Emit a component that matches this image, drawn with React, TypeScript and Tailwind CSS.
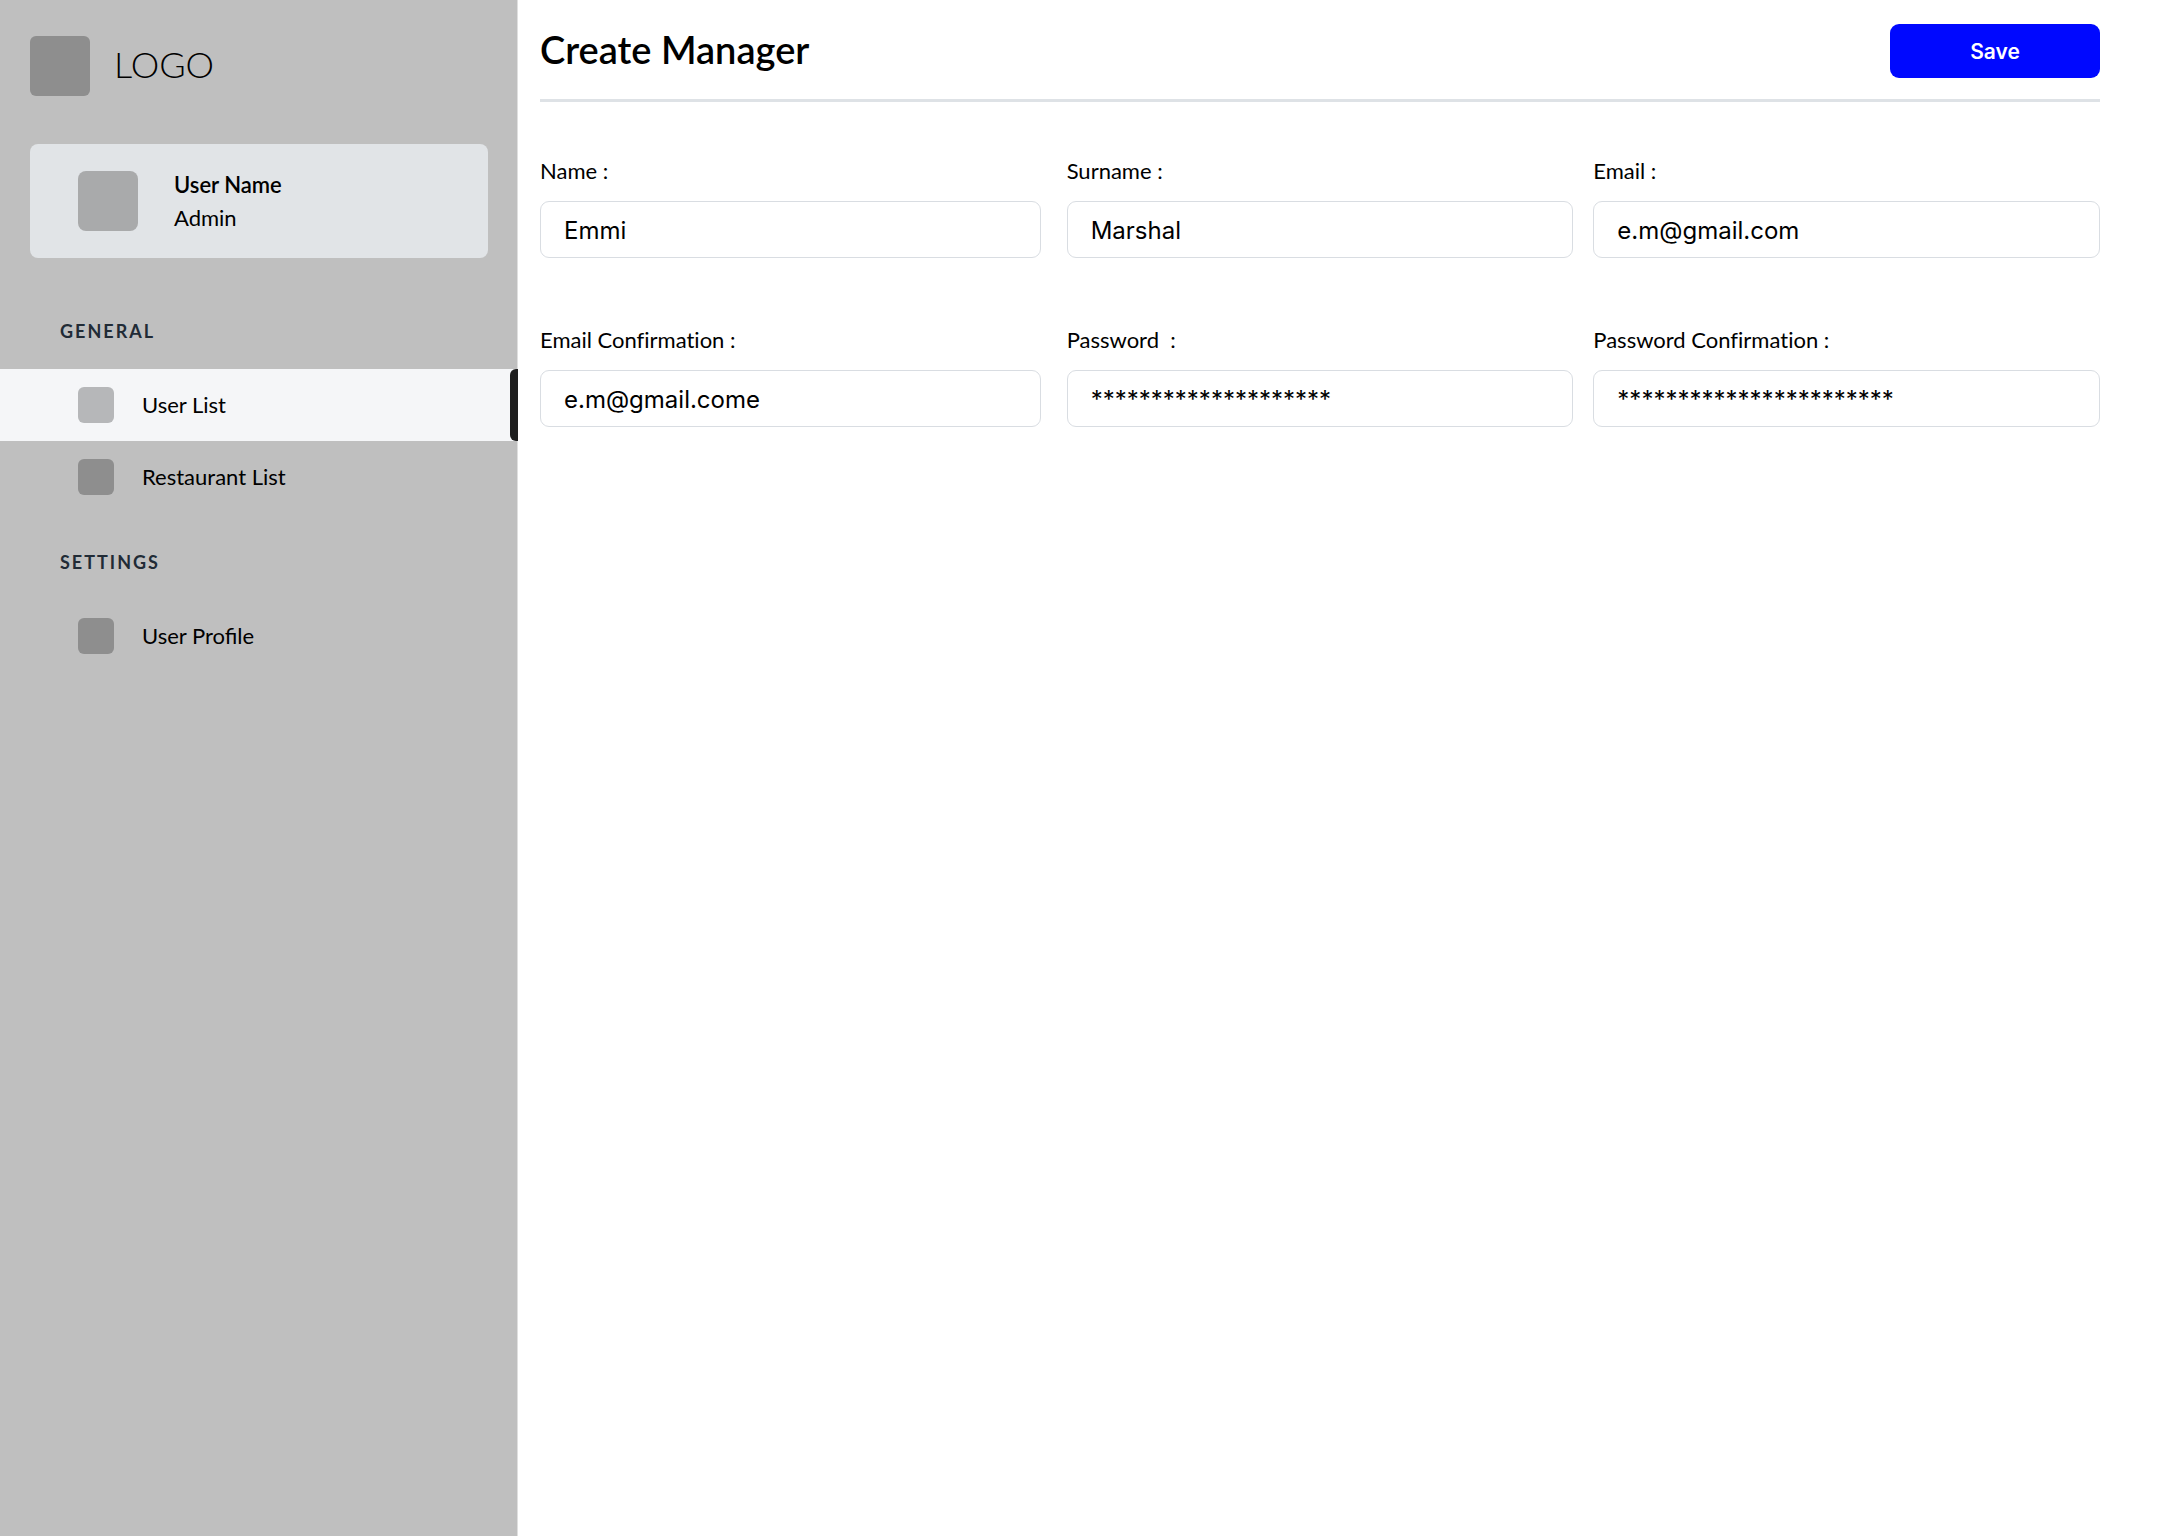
import { useState } from "react";

type NavItem = { label: string; active?: boolean };
type NavSection = { title: string; items: NavItem[] };
type Field = { id: string; label: string; value: string };

const sections: NavSection[] = [
  { title: "General", items: [{ label: "User List", active: true }, { label: "Restaurant List" }] },
  { title: "Settings", items: [{ label: "User Profile" }] },
];

const fields: Field[] = [
  { id: "name", label: "Name :", value: "Emmi" },
  { id: "surname", label: "Surname :", value: "Marshal" },
  { id: "email", label: "Email :", value: "e.m@gmail.com" },
  { id: "email-confirmation", label: "Email Confirmation :", value: "e.m@gmail.come" },
  { id: "password", label: "Password  :", value: "*".repeat(20) },
  { id: "password-confirmation", label: "Password Confirmation :", value: "*".repeat(23) },
];

function NavLink({ label, active }: NavItem) {
  return (
    <a
      href="#"
      aria-current={active ? "page" : undefined}
      className={
        active
          ? "relative flex h-[72px] items-center gap-7 bg-[#f5f6f8] pl-[78px] text-[22px] leading-7"
          : "flex h-[72px] items-center gap-7 pl-[78px] text-[22px] leading-7"
      }
    >
      <span className={active ? "size-9 rounded-md bg-[#b6b7b9]" : "size-9 rounded-md bg-[#8e8e8e]"} />
      {label}
      {active && <span className="absolute inset-y-0 -right-px w-2 rounded-l-md bg-[#1e1e1e]" />}
    </a>
  );
}

function Sidebar() {
  return (
    <aside className="w-[518px] shrink-0 border-r border-[#dfdfdf] bg-[#bfbfbf]">
      <div className="mx-[30px] mt-9 flex items-center gap-6">
        <span className="size-[60px] rounded-md bg-[#8e8e8e]" />
        <span className="pb-1 text-[36px] leading-[48px] font-light">LOGO</span>
      </div>
      <div className="mt-12 mr-[29px] ml-[30px] flex h-[114px] items-center gap-9 rounded-lg bg-[#e1e4e7] pl-12">
        <span className="size-[60px] rounded-lg bg-[#a9aaab]" />
        <div className="text-[22px] leading-[33px]">
          <p className="font-semibold">User Name</p>
          <p>Admin</p>
        </div>
      </div>
      <nav className="pt-[60px]">
        {sections.map((section) => (
          <section key={section.title} className="mb-9">
            <h2 className="mb-6 pl-[60px] text-[18px] leading-[27px] font-bold tracking-[2px] text-[#212b36] uppercase">
              {section.title}
            </h2>
            {section.items.map((item) => (
              <NavLink key={item.label} {...item} />
            ))}
          </section>
        ))}
      </nav>
    </aside>
  );
}

function TextField({ id, label, value }: Field) {
  const [text, setText] = useState(value);
  return (
    <div className="flex flex-col gap-[15px] first:pr-1.5 nth-4:pr-1.5">
      <label htmlFor={id} className="text-[22px] leading-[30px] whitespace-pre [font-variant-ligatures:none]">
        {label}
      </label>
      <input
        id={id}
        type="text"
        value={text}
        onChange={(e) => setText(e.target.value)}
        className="h-[57px] w-full rounded-[9px] border border-[#d9dde2] bg-white px-[23px] pt-0.5 font-['Inter',sans-serif] text-[24px]"
      />
    </div>
  );
}

export default function App() {
  return (
    <div className="flex min-h-screen bg-white font-['Lato',sans-serif] text-black">
      <Sidebar />
      <main className="min-w-0 flex-1 pr-[60px] pl-[22px]">
        <header className="flex items-center justify-between border-b-3 border-[#dee2e6] pt-6 pb-[21px]">
          <h1 className="pb-1 text-[38px] leading-[50px] font-semibold">Create Manager</h1>
          <button
            type="button"
            className="h-[54px] w-[210px] rounded-[9px] bg-[#0008ff] pt-0.5 font-['Inter',sans-serif] text-[21px] font-semibold text-white"
          >
            Save
          </button>
        </header>
        <form className="mt-[54px] grid grid-cols-3 gap-x-5 gap-y-[67px]">
          {fields.map((field) => (
            <TextField key={field.id} {...field} />
          ))}
        </form>
      </main>
    </div>
  );
}
